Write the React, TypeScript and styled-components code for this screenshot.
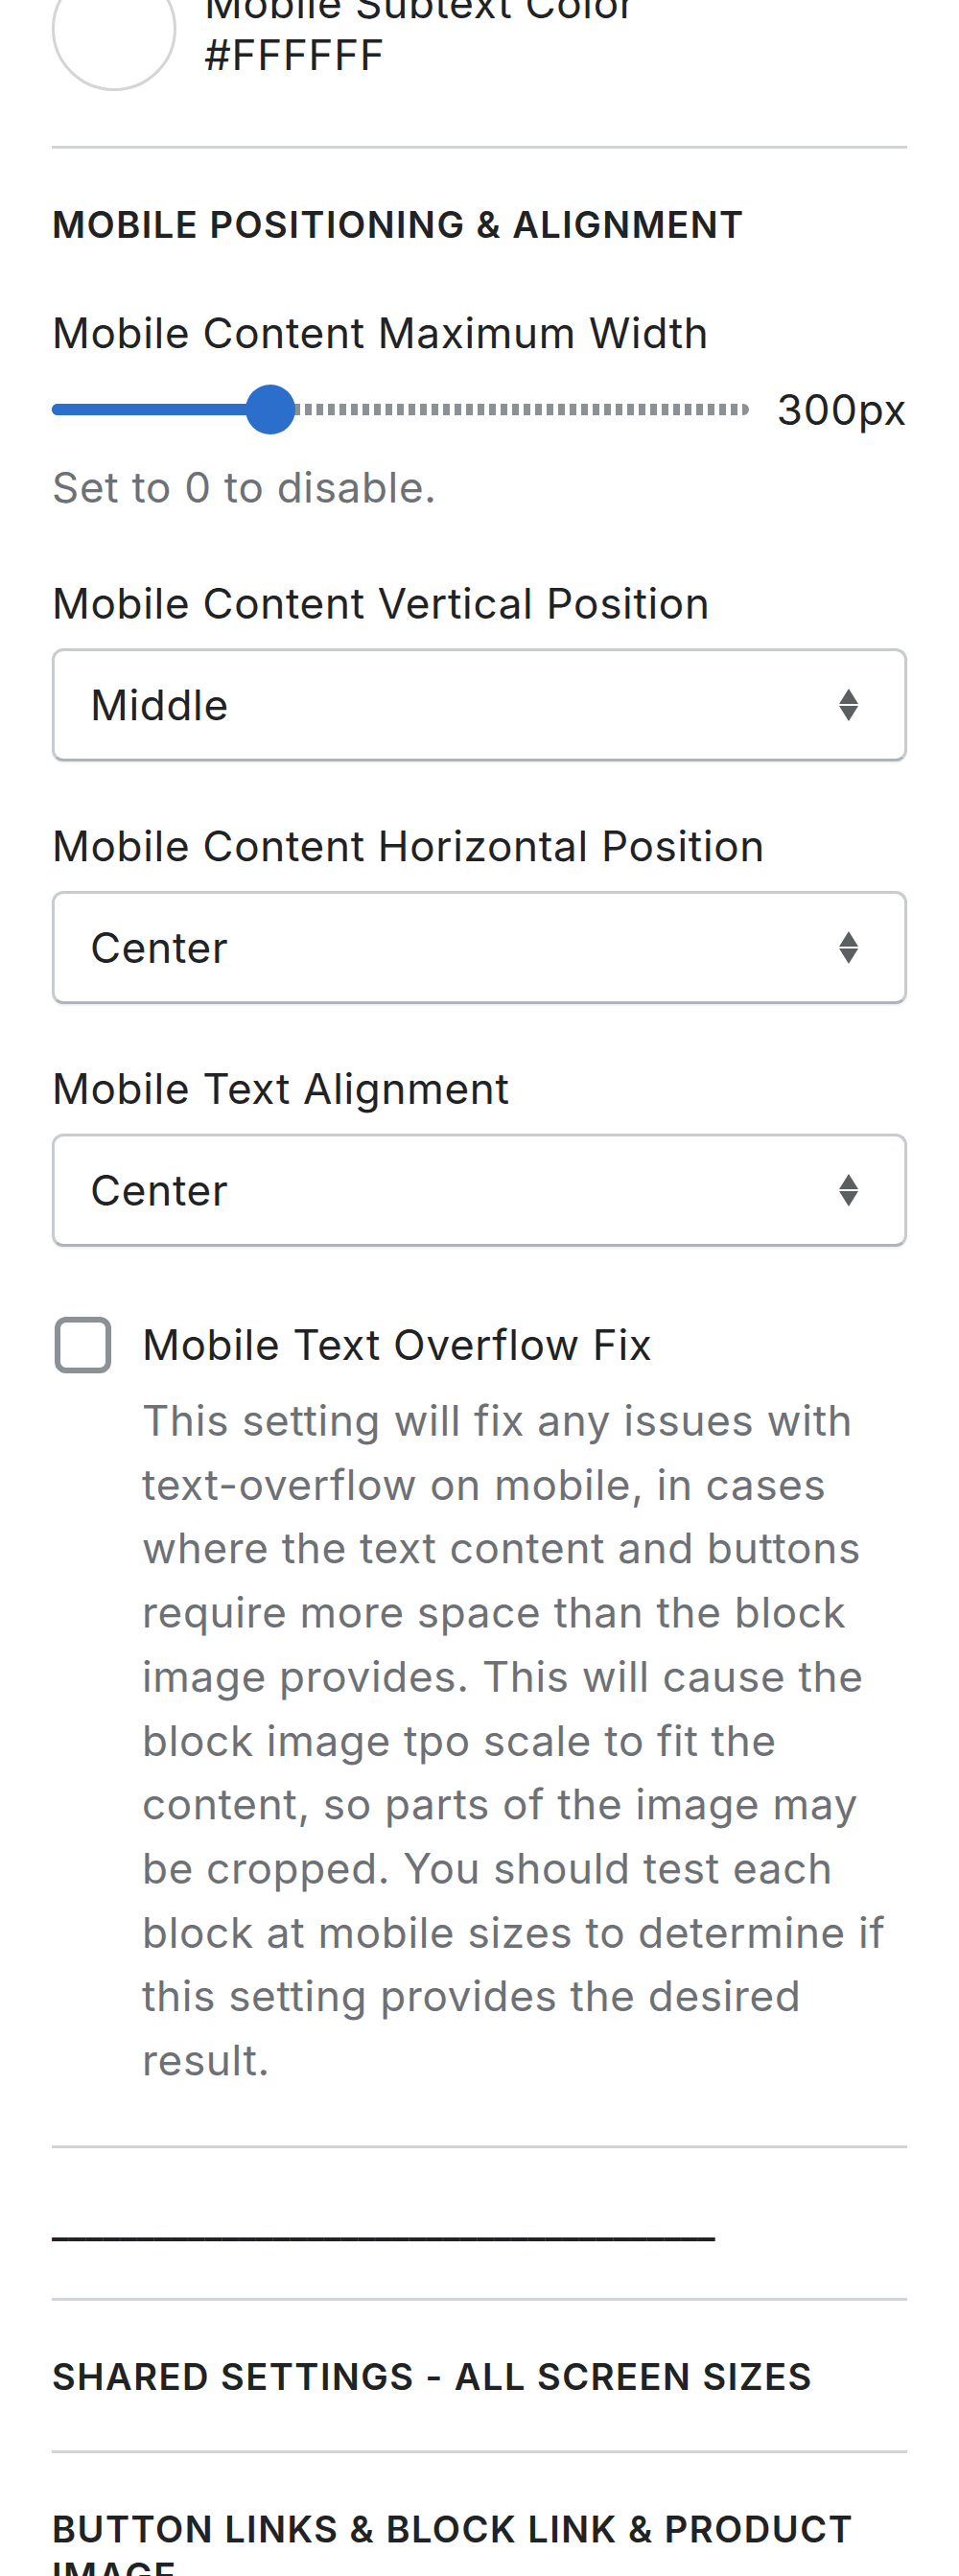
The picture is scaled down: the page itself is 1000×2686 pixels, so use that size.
import React from 'react';
import styled, { createGlobalStyle } from 'styled-components';

const GlobalStyle = createGlobalStyle`
  html, body {
    margin: 0;
    padding: 0;
    background: #ffffff;
  }
  body {
    font-family: Inter, "Noto Sans", "Liberation Sans", sans-serif;
    color: #202223;
    -webkit-font-smoothing: antialiased;
  }
`;

const Page = styled.div`
  display: flex;
  flex-direction: column;
  width: 1000px;
  box-sizing: border-box;
  padding: 0 54px;
`;

const ColorRow = styled.div`
  display: flex;
  align-items: center;
  gap: 29px;
  margin-top: -35px;
  margin-bottom: 57px;
`;

const Swatch = styled.div<{ $color: string }>`
  width: 130px;
  height: 130px;
  flex-shrink: 0;
  box-sizing: border-box;
  border-radius: 50%;
  border: 3px solid #d5d5d5;
  background: ${(p) => p.$color};
`;

const ColorText = styled.div`
  font-size: 44px;
  line-height: 54px;
  letter-spacing: 0.7px;
`;

const Divider = styled.hr`
  margin: 0;
  border: 0;
  height: 3px;
  background: #d2d5d8;
`;

const Section = styled.section`
  display: flex;
  flex-direction: column;
  padding: 55px 0 52px;
`;

const Heading = styled.h2`
  margin: 0;
  font-size: 38px;
  line-height: 49px;
  font-weight: 600;
  letter-spacing: 1.5px;
  text-transform: uppercase;
  color: #202223;
`;

// heading that only holds a row of underscores, drawn as one solid rule
const RuleHeading = styled(Heading)`
  letter-spacing: -0.1px;
  white-space: nowrap;
  overflow: hidden;
`;

const Field = styled.div`
  display: flex;
  flex-direction: column;
  margin-top: 55px;
`;

const Label = styled.label`
  font-size: 44px;
  line-height: 66px;
  letter-spacing: 0.7px;
  color: #202223;
`;

const HelpText = styled.div`
  margin-top: 15px;
  font-size: 44px;
  line-height: 66px;
  letter-spacing: 0.7px;
  color: #6d7175;
`;

const SliderRow = styled.div`
  display: flex;
  align-items: center;
  gap: 29px;
  height: 66px;
  margin-top: 14px;
`;

const Track = styled.div`
  position: relative;
  flex: 1;
  height: 12px;
  border-radius: 6px;
  background: repeating-linear-gradient(
    to right,
    #8c9196 0 7px,
    transparent 7px 12px
  );
`;

const TrackFill = styled.div`
  position: absolute;
  left: 0;
  top: 0;
  bottom: 0;
  border-radius: 6px;
  background: #2c6ecb;
`;

const Thumb = styled.div`
  position: absolute;
  top: 50%;
  width: 52px;
  height: 52px;
  margin-top: -26px;
  border-radius: 50%;
  background: #2c6ecb;
`;

const SliderValue = styled.span`
  flex-shrink: 0;
  font-size: 44px;
  line-height: 66px;
  letter-spacing: 0.7px;
  color: #202223;
`;

const SelectBox = styled.div`
  margin-top: 14px;
  height: 118px;
  box-sizing: border-box;
  display: flex;
  align-items: center;
  justify-content: space-between;
  padding: 0 48px 0 37px;
  border: 3px solid #c9cccf;
  border-bottom-color: #aeb4b9;
  border-radius: 12px;
  background: #ffffff;
  box-shadow: 0 2px 2px rgba(0, 0, 0, 0.06);
`;

const SelectValue = styled.span`
  font-size: 44px;
  line-height: 66px;
  letter-spacing: 0.7px;
  color: #202223;
`;

const CheckRow = styled.div`
  display: flex;
  align-items: center;
  gap: 32px;
  margin-top: 69px;
`;

const CheckBox = styled.span`
  width: 59px;
  height: 59px;
  margin-left: 3px;
  flex-shrink: 0;
  box-sizing: border-box;
  border: 6px solid #8c9196;
  border-radius: 12px;
  background: #ffffff;
`;

const CheckHelp = styled.p`
  margin: 13px 0 3px;
  padding-left: 94px;
  font-size: 44px;
  line-height: 66.7px;
  letter-spacing: 0.7px;
  color: #6d7175;
`;

const SelectArrows = () => (
  <svg width="20" height="34" viewBox="0 0 20 34" fill="#5c5f62">
    <path d="M10 0 L20 16 L0 16 Z" />
    <path d="M0 18 L20 18 L10 34 Z" />
  </svg>
);

type SliderProps = { value: number; min: number; max: number; unit: string };

const RangeSlider: React.FC<SliderProps> = ({ value, min, max, unit }) => {
  const pct = (value - min) / (max - min);
  return (
    <SliderRow>
      <Track>
        <TrackFill style={{ width: `calc(${pct} * (100% - 52px) + 26px)` }} />
        <Thumb style={{ left: `calc(${pct} * (100% - 52px))` }} />
      </Track>
      <SliderValue>
        {value}
        {unit}
      </SliderValue>
    </SliderRow>
  );
};

const SelectField: React.FC<{ label: string; value: string }> = ({ label, value }) => (
  <Field>
    <Label>{label}</Label>
    <SelectBox>
      <SelectValue>{value}</SelectValue>
      <SelectArrows />
    </SelectBox>
  </Field>
);

const App: React.FC = () => {
  return (
    <>
      <GlobalStyle />
      <Page>
        <ColorRow>
          <Swatch $color="#FFFFFF" />
          <ColorText>
            <div>Mobile Subtext Color</div>
            <div>#FFFFFF</div>
          </ColorText>
        </ColorRow>
        <Divider />

        <Section>
          <Heading>Mobile Positioning &amp; Alignment</Heading>
          <Field>
            <Label>Mobile Content Maximum Width</Label>
            <RangeSlider value={300} min={0} max={1000} unit="px" />
            <HelpText>Set to 0 to disable.</HelpText>
          </Field>
          <SelectField label="Mobile Content Vertical Position" value="Middle" />
          <SelectField label="Mobile Content Horizontal Position" value="Center" />
          <SelectField label="Mobile Text Alignment" value="Center" />
          <CheckRow>
            <CheckBox />
            <Label>Mobile Text Overflow Fix</Label>
          </CheckRow>
          <CheckHelp>
            This setting will fix any issues with text-overflow on mobile, in cases where the
            text content and buttons require more space than the block image provides. This
            will cause the block image tpo scale to fit the content, so parts of the image may
            be cropped. You should test each block at mobile sizes to determine if this setting
            provides the desired result.
          </CheckHelp>
        </Section>
        <Divider />

        <Section>
          <RuleHeading>_______________________________________</RuleHeading>
        </Section>
        <Divider />

        <Section>
          <Heading>Shared Settings - All Screen Sizes</Heading>
        </Section>
        <Divider />

        <Section>
          <Heading>Button Links &amp; Block Link &amp; Product Image</Heading>
        </Section>
      </Page>
    </>
  );
};

export default App;
